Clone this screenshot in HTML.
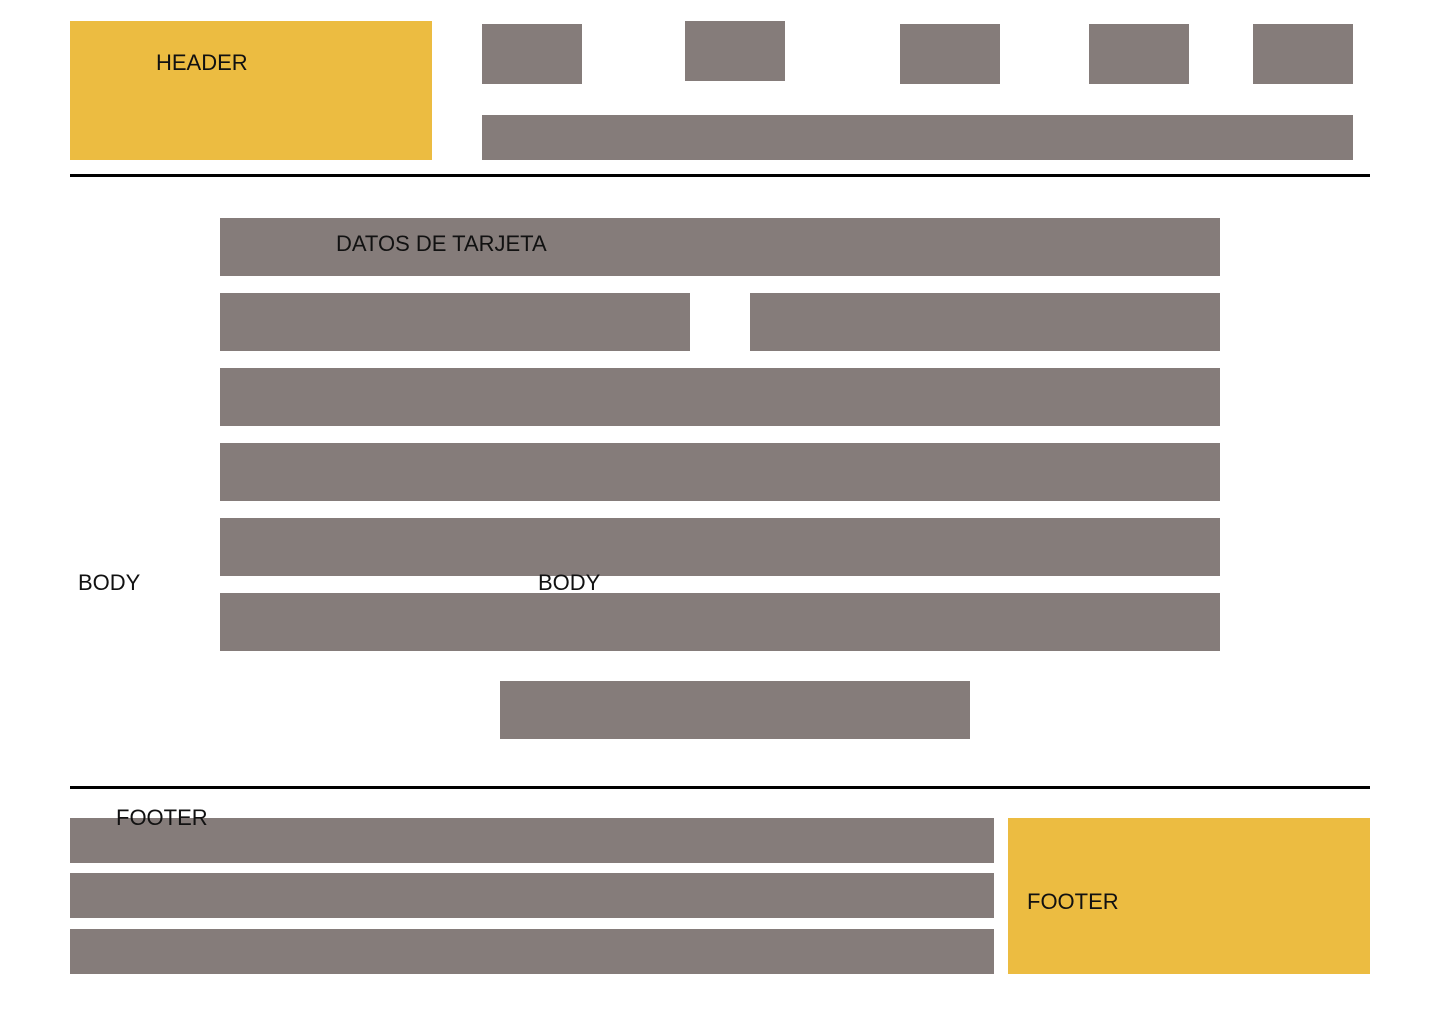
<!DOCTYPE html>
<html><head><meta charset="utf-8"><style>
body{margin:0;width:1440px;height:1024px;background:#fff;position:relative;overflow:hidden;font-family:"Liberation Sans",sans-serif;}
div{position:absolute}
.g{background:#857c7a}
.y{background:#ecbc41}
.t{font-size:22px;line-height:22px;color:#111;white-space:nowrap}
.l{background:#000;height:3px;left:70px;width:1300px}
</style></head><body>
<div class="y" style="left:70px;top:21px;width:362px;height:139px"></div>
<div class="g" style="left:482px;top:24px;width:100px;height:60px"></div>
<div class="g" style="left:685px;top:21px;width:100px;height:60px"></div>
<div class="g" style="left:900px;top:24px;width:100px;height:60px"></div>
<div class="g" style="left:1089px;top:24px;width:100px;height:60px"></div>
<div class="g" style="left:1253px;top:24px;width:100px;height:60px"></div>
<div class="g" style="left:482px;top:115px;width:871px;height:45px"></div>
<div class="l" style="top:174px"></div>

<div class="g" style="left:220px;top:218px;width:1000px;height:58px"></div>
<div class="g" style="left:220px;top:293px;width:470px;height:58px"></div>
<div class="g" style="left:750px;top:293px;width:470px;height:58px"></div>
<div class="g" style="left:220px;top:368px;width:1000px;height:58px"></div>
<div class="g" style="left:220px;top:443px;width:1000px;height:58px"></div>
<div class="g" style="left:220px;top:518px;width:1000px;height:58px"></div>
<div class="g" style="left:220px;top:593px;width:1000px;height:58px"></div>
<div class="g" style="left:500px;top:681px;width:470px;height:58px"></div>

<div class="l" style="top:786px"></div>
<div class="g" style="left:70px;top:818px;width:924px;height:45px"></div>
<div class="g" style="left:70px;top:873px;width:924px;height:45px"></div>
<div class="g" style="left:70px;top:929px;width:924px;height:45px"></div>
<div class="y" style="left:1008px;top:818px;width:362px;height:156px"></div>

<div class="t" style="left:156px;top:52px">HEADER</div>
<div class="t" style="left:336px;top:233px">DATOS DE TARJETA</div>
<div class="t" style="left:78px;top:572px">BODY</div>
<div class="t" style="left:538px;top:572px">BODY</div>
<div class="t" style="left:116px;top:807px">FOOTER</div>
<div class="t" style="left:1027px;top:891px">FOOTER</div>
</body></html>
